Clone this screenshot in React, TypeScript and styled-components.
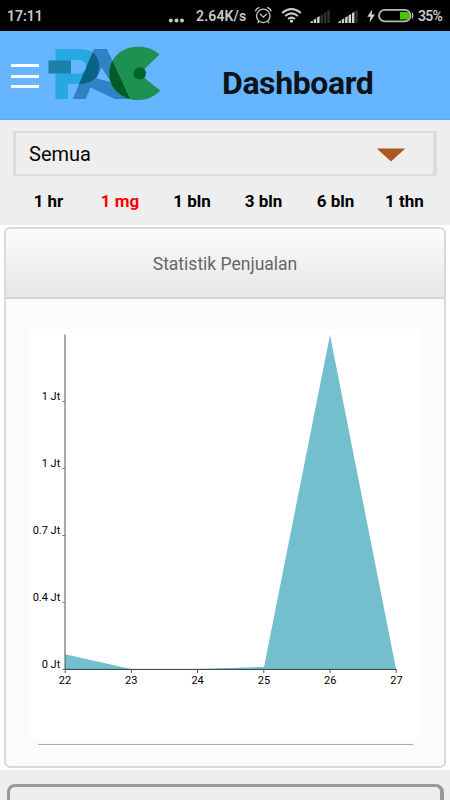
import React from "react";
import styled, { createGlobalStyle } from "styled-components";

const GlobalStyle = createGlobalStyle`
  * { box-sizing: border-box; }
  body { margin: 0; background: #fff; font-family: Roboto, "Liberation Sans", sans-serif; }
`;

const Screen = styled.div`
  width: 450px;
  height: 800px;
  overflow: hidden;
  display: flex;
  flex-direction: column;
`;

const StatusBar = styled.div`
  height: 31px;
  flex: none;
  background: #000;
  color: #cacaca;
  display: flex;
  align-items: center;
  padding: 1px 8px 0 7px;
  font-size: 14px;
  line-height: 16px;
  font-weight: 600;
`;
const Clock = styled.span`
  flex: 1;
  letter-spacing: 0;
`;
const Speed = styled.span`
  width: 51px;
  margin-left: 12px;
  white-space: nowrap;
  letter-spacing: 0.15px;
`;
const StatusIcons = styled.svg`
  display: block;
  width: 161px;
  height: 31px;
  margin: -1px 0 0 6px;
  flex: none;
`;
const Dots = styled.svg`
  display: block;
  width: 16px;
  height: 31px;
  margin-top: -1px;
`;
const Percent = styled.span`
  width: 24px;
  margin-left: 4px;
  letter-spacing: -0.8px;
`;

const Header = styled.header`
  height: 89px;
  flex: none;
  background: #65b6ff;
  border-bottom: 1px solid #55afff;
  display: flex;
  align-items: flex-start;
`;
const Menu = styled.button`
  width: 28px;
  height: 24px;
  margin: 33px 0 0 11px;
  padding: 0;
  border: 0;
  background: none;
  display: flex;
  flex-direction: column;
  justify-content: space-between;
`;
const MenuLine = styled.span`
  height: 3px;
  width: 28px;
  background: #fff;
`;
const Logo = styled.svg`
  width: 114px;
  height: 58px;
  margin: 14px 0 0 8px;
`;
const Title = styled.h1`
  margin: 33px 0 0 61px;
  font-size: 32px;
  line-height: 38px;
  font-weight: 700;
  color: #0c1319;
  white-space: nowrap;
  letter-spacing: -0.4px;
`;

const Filters = styled.section`
  height: 105px;
  flex: none;
  background: #eee;
  padding: 11px 13px 0;
`;
const Select = styled.div`
  height: 45px;
  border: 2px solid #dcdcdc;
  border-left-width: 3px;
  border-right-width: 4px;
  display: flex;
  align-items: center;
  justify-content: space-between;
  padding: 1px 27px 0 13px;
  font-size: 20px;
  color: #080808;
`;
const Arrow = styled.svg`
  width: 30px;
  height: 14px;
  margin-top: 1px;
`;
const Ranges = styled.nav`
  height: 49px;
  display: grid;
  grid-template-columns: 71px 72px 72px 71px 73px 65px;
`;
const Range = styled.span<{ $active?: boolean }>`
  text-align: center;
  font-size: 17px;
  line-height: 51px;
  font-weight: 700;
  color: ${(p) => (p.$active ? "#fe0000" : "#000")};
`;

const Card = styled.section`
  margin: 2px 4px 0;
  height: 541px;
  flex: none;
  border: 2px solid #dadada;
  border-radius: 6px;
  background: #fbfbfb;
  overflow: hidden;
`;
const CardTitle = styled.h2`
  margin: 0;
  height: 70px;
  border-bottom: 2px solid #d5d5d5;
  background: linear-gradient(#fcfcfc, #e6e6e6);
  text-align: center;
  font-size: 17.5px;
  line-height: 70px;
  font-weight: 400;
  color: #666;
`;
const ChartPanel = styled.div`
  margin: 30px 23px 0;
  height: 410px;
  border-radius: 8px;
  background: #fff;
`;
const ChartSvg = styled.svg`
  display: block;
  width: 392px;
  height: 410px;
  font: 11px Roboto, sans-serif;
`;
const Rule = styled.div`
  height: 1px;
  margin: 5px 31px 0 32px;
  background: #aaa;
`;
const NextSection = styled.section`
  margin-top: 2px;
  flex: 1;
  background: #eee;
  padding: 14px 6px 0 7px;
  overflow: hidden;
`;
const NextCard = styled.div`
  height: 60px;
  border: 3px solid #999;
  border-right-width: 4px;
  border-radius: 8px;
`;

const ranges = ["1 hr", "1 mg", "1 bln", "3 bln", "6 bln", "1 thn"];
const days = [22, 23, 24, 25, 26, 27];
const levels = ["1 Jt", "1 Jt", "0.7 Jt", "0.4 Jt", "0 Jt"];

const Signal = ({ x, filled }: { x: number; filled: number }) => (
  <g>
    {[0, 1, 2, 3, 4, 5].map((i) => {
      const h = 2 + i * 2.2;
      return (
        <path
          key={i}
          d={`M${x + i * 3.4} 23v${-h + 1}l2.5 -1.5v${h + 0.5}z`}
          fill={i < filled ? "#d2d2d2" : "#303030"}
        />
      );
    })}
  </g>
);

function StatusGlyphs() {
  return (
    <StatusIcons viewBox="253 0 161 31">
      <g fill="none" stroke="#c8c8c8" strokeWidth="1.3">
        <circle cx="263.3" cy="15.9" r="6.7" />
        <path d="M259.9 13.8l3.5 3.3 3.4-3.3M255.3 11.3q1-3 4.2-3.9M271.3 11.3q-1-3-4.2-3.9M259 21.2l-1.4 1.8M267.6 21.2l1.4 1.8" />
      </g>
      <g fill="none" stroke="#cdcdcd" strokeWidth="2">
        <path d="M282.2 12.9q9.3-7.8 18.6 0M285.1 16q6.4-5.2 12.8 0M288 19q3.5-2.7 7 0" />
      </g>
      <circle cx="291.5" cy="21.1" r="1.6" fill="#ddd" />
      <Signal x={310.3} filled={3} />
      <Signal x={338.3} filled={5} />
      <path d="M372.5 9l-5.2 7.8h3.2l-1 6 5.4-8.2h-3.3z" fill="#d2d2d2" />
      <rect x="379" y="9.9" width="31.5" height="11.5" rx="5.75" fill="none" stroke="#bababa" strokeWidth="1.8" />
      <path d="M412.2 12.8q1.2 2.8 0 5.6" fill="none" stroke="#bababa" strokeWidth="1.3" />
      <path d="M400 12h6q4 0 4 3.7t-4 3.8h-6z" fill="#49c500" />
    </StatusIcons>
  );
}

function PacLogo() {
  const aShape =
    "M94 49H107L130 99H115L90.5 87.5L85.7 99H72.7ZM101.5 67.5L96.5 78.5L111 82Z";
  return (
    <Logo viewBox="47 45 114 58">
      <defs>
        <clipPath id="a-letter"><path d={aShape} clipRule="evenodd" /></clipPath>
      </defs>
      <path fillRule="evenodd" fill="#25a9e0" d="M55.5 49H81Q99 50 99 66.5T81 84H68V99H55.5ZM71 60V73.7H79Q86 73.2 86 66.8T79 60Z" />
      <path fill="#1b80aa" d="M48.5 60.4H71V73.5H48.5Z" />
      <path fillRule="evenodd" fill="#3082c4" d={aShape} />
      <g clipPath="url(#a-letter)">
        <path fillRule="evenodd" fill="#096386" d="M68 49H81Q99 50 99 66.5T81 84H68ZM71 60V73.7H79Q86 73.2 86 66.8T79 60Z" />
      </g>
      <path fill="#1c9151" d="M159.5 54.5C153 49 147 46.8 138 46.8C121 46.8 109.4 58.5 109.4 73.4C109.4 88.3 121 100 138 100C147 100 154 97 160.2 90.5L144.5 78V69Z" />
      <path d="M112.5 61L130 99Q109.4 92 109.4 73.4Q109.4 66 112.5 61Z" fill="#005b27" />
      <circle cx="139.8" cy="73.4" r="6.2" fill="#00642a" />
    </Logo>
  );
}

function SalesChart() {
  return (
    <ChartSvg viewBox="29 329 392 410">
      <path d="M65 669V654.3L131 669ZM197 669L264 667L330 335L396 669Z" fill="#74bfcd" />
      <path d="M65 334.5V669" stroke="#555" strokeWidth="1" />
      <path d="M63 669.4H396.5" stroke="#223b40" strokeWidth="1" />
      {days.map((day, i) => (
        <g key={day}>
          <path d={`M${65.2 + i * 66.2} 669v4`} stroke="#555" />
          <text x={65 + i * 66.3} y="683.8" textAnchor="middle">{day}</text>
        </g>
      ))}
      {levels.map((level, i) => (
        <g key={i}>
          <path d={`M62.5 ${401.5 + i * 67}h2.5`} stroke="#777" />
          <text x="60.3" y={400.3 + i * 67} textAnchor="end">{level}</text>
        </g>
      ))}
    </ChartSvg>
  );
}

export default function App() {
  return (
    <Screen>
      <GlobalStyle />
      <StatusBar>
        <Clock>17:11</Clock>
        <Dots viewBox="167 0 16 31">
          <g fill="#c8c8c8">
            <circle cx="169.8" cy="20.5" r="2" />
            <circle cx="175.5" cy="20.5" r="2" />
            <circle cx="181" cy="20.5" r="2" />
          </g>
        </Dots>
        <Speed>2.64K/s</Speed>
        <StatusGlyphs />
        <Percent>35%</Percent>
      </StatusBar>
      <Header>
        <Menu aria-label="Menu"><MenuLine /><MenuLine /><MenuLine /></Menu>
        <PacLogo />
        <Title>Dashboard</Title>
      </Header>
      <Filters>
        <Select>
          Semua
          <Arrow viewBox="0 0 30 14"><path d="M.8.5H29.3L15 13.5Z" fill="#ad5722" /></Arrow>
        </Select>
        <Ranges>
          {ranges.map((range) => <Range key={range} $active={range === "1 mg"}>{range}</Range>)}
        </Ranges>
      </Filters>
      <Card>
        <CardTitle>Statistik Penjualan</CardTitle>
        <ChartPanel><SalesChart /></ChartPanel>
        <Rule />
      </Card>
      <NextSection><NextCard /></NextSection>
    </Screen>
  );
}
